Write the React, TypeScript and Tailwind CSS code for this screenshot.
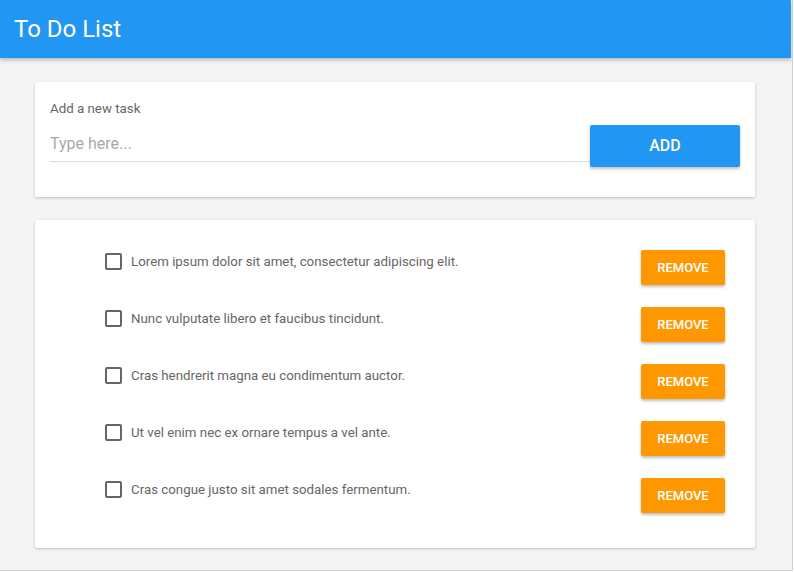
import { useState } from "react";

const initialTasks = [
  "Lorem ipsum dolor sit amet, consectetur adipiscing elit.",
  "Nunc vulputate libero et faucibus tincidunt.",
  "Cras hendrerit magna eu condimentum auctor.",
  "Ut vel enim nec ex ornare tempus a vel ante.",
  "Cras congue justo sit amet sodales fermentum.",
];

export default function App() {
  const [tasks, setTasks] = useState(initialTasks);
  const [text, setText] = useState("");
  const [done, setDone] = useState<Record<number, boolean>>({});

  const addTask = () => {
    if (!text.trim()) return;
    setTasks([...tasks, text.trim()]);
    setText("");
  };

  return (
    <div
      className="w-[793px] h-[571px] bg-[#f4f4f4] border-r border-b border-[#cfcfcf] overflow-hidden"
      style={{ fontFamily: "Roboto, 'Liberation Sans', sans-serif" }}
    >
      <header className="w-[791px] h-[58px] bg-[#2196f3] flex items-center px-[14px] shadow-[0_2px_4px_rgba(0,0,0,0.25)]">
        <h1 className="text-white text-[24px] font-normal">To Do List</h1>
      </header>

      <div className="w-[720px] ml-[35px] mt-[24px] bg-white rounded-[2px] shadow-[0_1px_3px_rgba(0,0,0,0.22)] px-[15px] pt-[18px] pb-[30px]">
        <label className="block text-[13.3px] leading-[18px] text-[#666]">
          Add a new task
        </label>
        <div className="flex items-start mt-[7px]">
          <input
            value={text}
            onChange={(e) => setText(e.target.value)}
            placeholder="Type here..."
            className="flex-1 h-[37px] border-b border-[#ddd] text-[16px] text-[#444] placeholder:text-[#aaa] outline-none"
          />
          <button
            onClick={addTask}
            className="w-[150px] h-[42px] bg-[#2196f3] text-white text-[16px] font-medium rounded-[2px] shadow-[0_2px_3px_rgba(0,0,0,0.25)]"
          >
            ADD
          </button>
        </div>
      </div>

      <div className="w-[720px] ml-[35px] mt-[23px] bg-white rounded-[2px] shadow-[0_1px_3px_rgba(0,0,0,0.22)] pl-[70px] pr-[30px] pt-[30px] pb-[35px] flex flex-col gap-[22px]">
        {tasks.map((task, i) => (
          <div key={i} className="flex justify-between items-start">
            <label className="flex items-center gap-[9px] pt-[2px] cursor-pointer">
              <span
                onClick={() => setDone({ ...done, [i]: !done[i] })}
                className="w-[17px] h-[17px] border-2 border-[#666] rounded-[2px] flex items-center justify-center"
              >
                {done[i] && <span className="w-[9px] h-[9px] bg-[#666]" />}
              </span>
              <span className="text-[13.3px] text-[#666]">{task}</span>
            </label>
            <button
              onClick={() => setTasks(tasks.filter((_, j) => j !== i))}
              className="w-[84px] h-[35px] bg-[#ff9800] text-white text-[13px] font-medium rounded-[2px] shadow-[0_2px_3px_rgba(0,0,0,0.25)]"
            >
              REMOVE
            </button>
          </div>
        ))}
      </div>
    </div>
  );
}
